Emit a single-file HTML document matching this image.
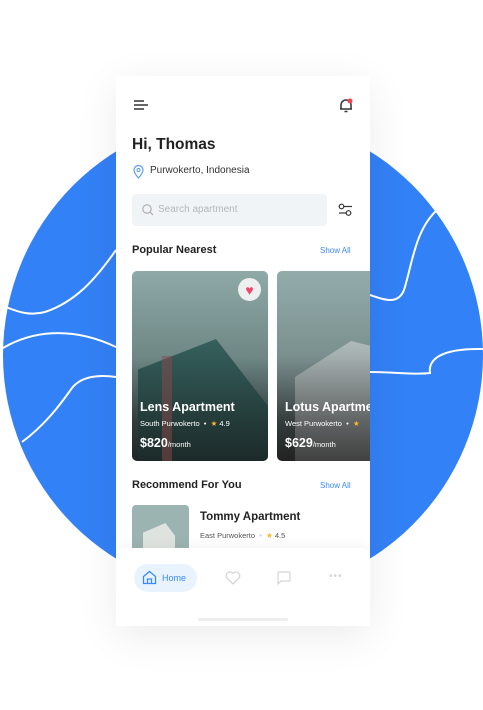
<!DOCTYPE html>
<html><head><style>
*{margin:0;padding:0;box-sizing:border-box}
body{width:483px;height:710px;background:#fff;position:relative;overflow:hidden;font-family:"Liberation Sans",sans-serif;color:#222}
.ph{position:absolute;left:116px;top:76px;width:254px;height:550px;background:#fff;box-shadow:0 10px 40px rgba(0,0,0,.08);overflow:hidden}
.a{position:absolute}
.card{position:absolute;top:195px;width:136px;height:190px;border-radius:5px;overflow:hidden;background:linear-gradient(180deg,#8fa9a8 0%,#6f8886 45%,#2f3b3a 80%,#1e2625 100%)}
.t{color:#fff;position:absolute;left:8px}
</style></head><body>
<svg class="a" style="left:0;top:0" width="483" height="710">
<circle cx="243" cy="355" r="240" fill="#3381f6"/>
<g fill="none" stroke="#fff" stroke-width="2">
<path d="M6 307 C18 312 30 316 45 312 C75 302 95 280 116 250"/>
<path d="M3 348 C30 332 70 325 116 347"/>
<path d="M22 442 C45 425 60 405 72 388 C80 378 95 374 116 377"/>
<path d="M370 295 C385 300 398 305 404 290 C412 265 415 230 437 210"/>
<path d="M370 372 C395 372 415 375 430 373 C428 360 440 348 483 349"/>
</g></svg>
<div class="ph">
<svg class="a" style="left:17px;top:23px" width="16" height="12"><g stroke="#333" stroke-width="1.5"><line x1="1" y1="2" x2="11" y2="2"/><line x1="1" y1="6" x2="15" y2="6"/><line x1="1" y1="10" x2="11" y2="10"/></g></svg>
<svg class="a" style="left:222px;top:21px" width="16" height="16"><path d="M3 12 V8 a5 5 0 0 1 10 0 V12 H2 H14 M6.5 14.5 h3" fill="none" stroke="#333" stroke-width="1.5"/><circle cx="12" cy="4" r="2.5" fill="#f0444c"/></svg>
<div class="a" style="left:16px;top:60px;font-size:15.5px;font-weight:bold">Hi, Thomas</div>
<svg class="a" style="left:17px;top:89px" width="11" height="14"><path d="M5.5 13 C1 8 1 6 1 5 a4.5 4.5 0 0 1 9 0 c0 1 0 3-4.5 8z" fill="none" stroke="#5b9cf6" stroke-width="1.2"/><circle cx="5.5" cy="5" r="1.5" fill="none" stroke="#5b9cf6"/></svg>
<div class="a" style="left:34px;top:89px;font-size:10px;color:#333">Purwokerto, Indonesia</div>
<div class="a" style="left:16px;top:118px;width:195px;height:32px;background:#f1f4f7;border-radius:4px"></div>
<svg class="a" style="left:26px;top:128px" width="12" height="12"><circle cx="5" cy="5" r="4.2" fill="none" stroke="#aaa" stroke-width="1.1"/><line x1="8" y1="8" x2="11" y2="11" stroke="#aaa" stroke-width="1.1"/></svg>
<div class="a" style="left:42px;top:128px;font-size:10px;color:#b3b8bd">Search apartment</div>
<svg class="a" style="left:222px;top:127px" width="15" height="14"><g fill="none" stroke="#333" stroke-width="1.2"><circle cx="3.5" cy="3.5" r="2.3"/><line x1="6" y1="3.5" x2="14" y2="3.5"/><circle cx="10.5" cy="10" r="2.3"/><line x1="1" y1="10" x2="8" y2="10"/></g></svg>
<div class="a" style="left:16px;top:168px;font-size:11px;font-weight:bold">Popular Nearest</div>
<div class="a" style="left:204px;top:170px;font-size:8px;color:#3c8af6">Show All</div>
<div class="card" style="left:16px">
<div class="a" style="left:6px;top:68px;width:130px;height:122px;background:linear-gradient(180deg,#2e5b58,#1c2b2a);clip-path:polygon(0 25%,60% 0,100% 55%,100% 100%,0 100%);opacity:.9"></div>
<div class="a" style="left:30px;top:85px;width:10px;height:105px;background:#8a4a48;opacity:.5"></div>
<div class="a" style="left:106px;top:7px;width:23px;height:23px;border-radius:50%;background:#eef0ef;text-align:center;line-height:24px;color:#f3466f;font-size:14px">♥</div>
<div class="t" style="top:129px;font-size:12.5px;font-weight:bold">Lens Apartment</div>
<div class="t" style="top:148px;font-size:7.5px">South Purwokerto &nbsp;• &nbsp;<span style="color:#f8b62d">★</span> 4.9</div>
<div class="t" style="top:165px;font-size:12.5px;font-weight:bold">$820<span style="font-size:7.5px;font-weight:normal">/month</span></div>
</div>
<div class="card" style="left:161px;background:linear-gradient(180deg,#93acab 0%,#7a908f 45%,#333b3a 80%,#222 100%)">
<div class="a" style="left:18px;top:70px;width:80px;height:120px;background:linear-gradient(180deg,#cfd3d3,#555);clip-path:polygon(0 30%,70% 0,100% 5%,100% 100%,0 100%);opacity:.6"></div>
<div class="t" style="top:129px;font-size:12.5px;font-weight:bold;white-space:nowrap">Lotus Apartment</div>
<div class="t" style="top:148px;font-size:7.5px;white-space:nowrap">West Purwokerto &nbsp;• &nbsp;<span style="color:#f8b62d">★</span></div>
<div class="t" style="top:165px;font-size:12.5px;font-weight:bold">$629<span style="font-size:7.5px;font-weight:normal">/month</span></div>
</div>
<div class="a" style="left:16px;top:403px;font-size:11px;font-weight:bold">Recommend For You</div>
<div class="a" style="left:204px;top:405px;font-size:8px;color:#3c8af6">Show All</div>
<div class="a" style="left:16px;top:429px;width:57px;height:50px;border-radius:4px;background:#9bb3b1;overflow:hidden"><div class="a" style="left:11px;top:18px;width:32px;height:32px;background:#dfe3e0;clip-path:polygon(0 30%,70% 0,100% 40%,100% 100%,0 100%)"></div></div>
<div class="a" style="left:84px;top:435px;font-size:11.5px;font-weight:bold">Tommy Apartment</div>
<div class="a" style="left:84px;top:455px;font-size:7.5px;color:#555">East Purwokerto &nbsp;<span style="color:#ccc">•</span> &nbsp;<span style="color:#f8b62d">★</span> 4.5</div>
<div class="a" style="left:0;top:472px;width:254px;height:78px;background:#fff;border-radius:8px 8px 0 0;box-shadow:0 -4px 12px rgba(0,0,0,.04)"></div>
<div class="a" style="left:18px;top:488px;width:63px;height:28px;border-radius:14px;background:#e8f3fe"></div>
<svg class="a" style="left:26px;top:494px" width="15" height="15"><path d="M1.5 6.5 L7.5 1.5 L13.5 6.5 V13.5 H1.5 Z M5.5 13.5 V9 H9.5 V13.5" fill="none" stroke="#3c8af6" stroke-width="1.3"/></svg>
<div class="a" style="left:46px;top:497px;font-size:9px;color:#3c8af6">Home</div>
<svg class="a" style="left:109px;top:495px" width="16" height="14"><path d="M8 13 L2 7 A3.3 3.3 0 0 1 8 2.5 A3.3 3.3 0 0 1 14 7 Z" fill="none" stroke="#d5d5d5" stroke-width="1.3"/></svg>
<svg class="a" style="left:161px;top:495px" width="14" height="14"><path d="M1 1 H13 V10 H4 L1 13 Z" fill="none" stroke="#d5d5d5" stroke-width="1.2"/></svg>
<div class="a" style="left:213px;top:495px;font-size:10px;color:#d5d5d5;letter-spacing:1px">•••</div>
<div class="a" style="left:82px;top:542px;width:90px;height:3px;border-radius:2px;background:#eee"></div>
</div>
</body></html>
